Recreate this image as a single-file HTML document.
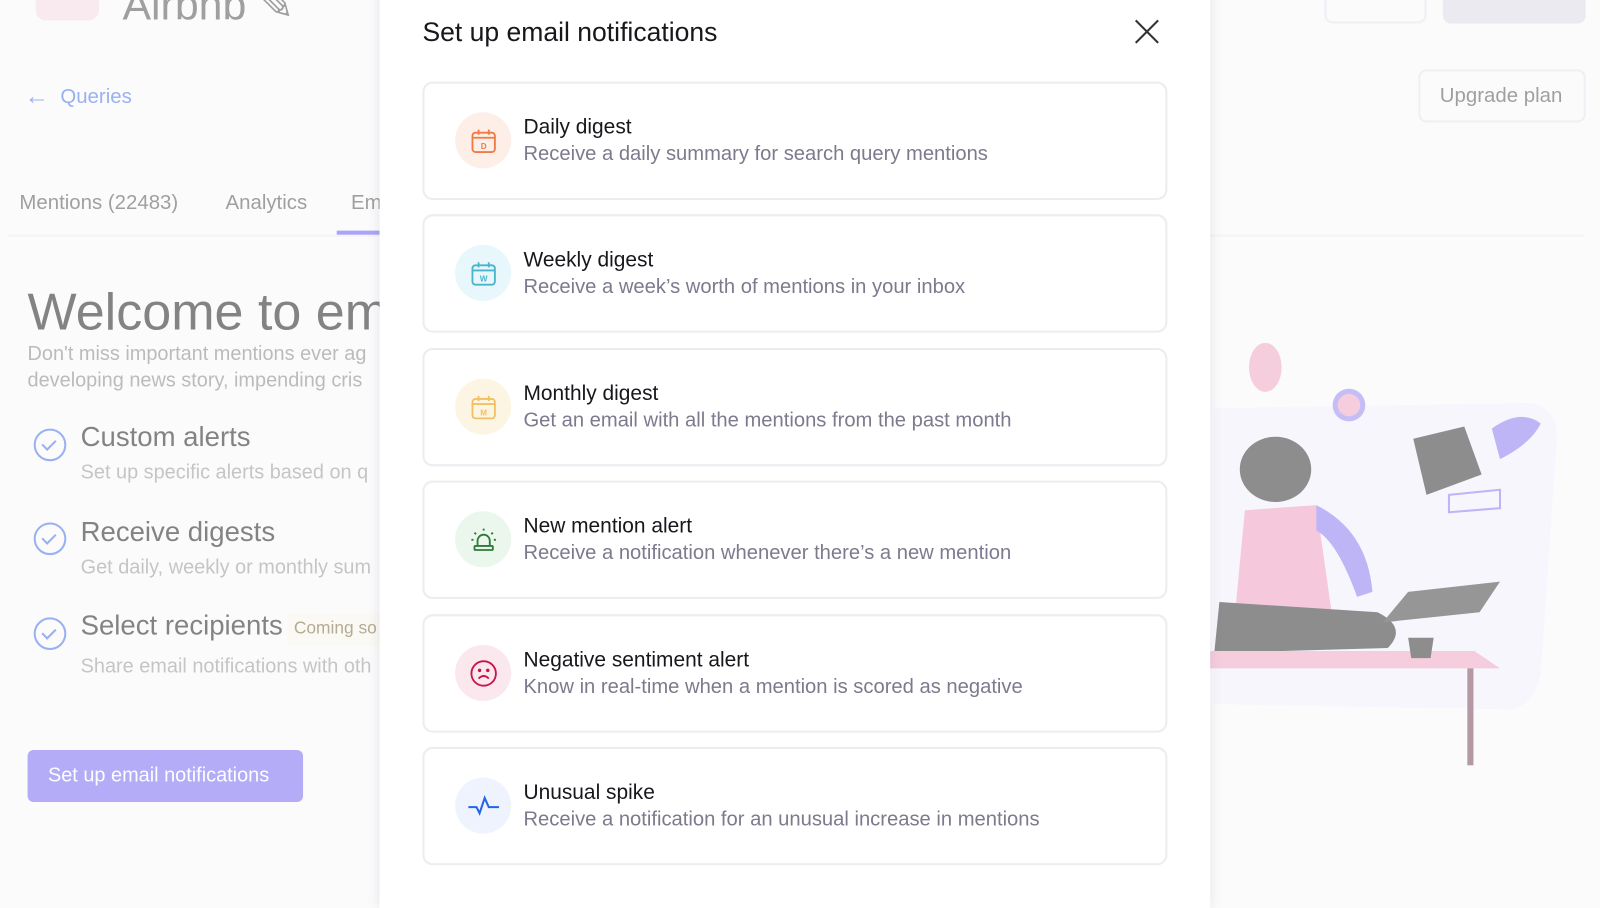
<!DOCTYPE html>
<html><head><meta charset="utf-8"><style>
*{box-sizing:border-box;margin:0;padding:0}
body{width:1600px;height:880px;overflow:hidden;background:#fbfbfc;font-family:"Liberation Sans",sans-serif;position:relative}
#w{position:absolute;left:0;top:0;width:1568px;height:880px;transform:scale(1.0204);transform-origin:0 0}
.bg{position:absolute;inset:0;opacity:.55}
.a{position:absolute;white-space:nowrap}
.modal{position:absolute;left:372px;top:-10px;width:814px;height:900px;background:#fff;box-shadow:0 0 12px rgba(60,60,90,.12)}
.card{position:absolute;left:42px;width:730px;height:116px;border:2px solid #ececf1;border-radius:10px;background:#fff}
.ic{position:absolute;left:30px;top:28px;width:55px;height:55px;border-radius:50%;display:flex;align-items:center;justify-content:center}
.t{position:absolute;left:97px;top:31px;font-size:20.5px;color:#17171c}
.d{position:absolute;left:97px;top:58px;font-size:19.8px;color:#7b7b8d}
.ck{position:absolute;width:32px;height:32px;border:2.5px solid #4a74e8;border-radius:50%}
.ck::after{content:"";position:absolute;left:9px;top:6px;width:6px;height:11px;border:solid #4a74e8;border-width:0 2.5px 2.5px 0;transform:rotate(45deg)}
</style></head><body><div id="w">
<div class="bg">
<div class="a" style="left:35px;top:-40px;width:62px;height:60px;background:#f8dde5;border-radius:10px"></div>
<div class="a" style="left:120px;top:-20px;font-size:42px;color:#555">Airbnb ✎</div>
<div class="a" style="left:24px;top:80px;font-size:20px;color:#4a74e8"><span style="font-size:24px;position:relative;top:1px">←</span>&nbsp; Queries</div>
<div class="a" style="left:19px;top:188px;font-size:20px;color:#555">Mentions (22483)</div>
<div class="a" style="left:221px;top:188px;font-size:20px;color:#555">Analytics</div>
<div class="a" style="left:344px;top:188px;font-size:20px;color:#555">Em</div>
<div class="a" style="left:8px;top:230px;width:1544px;height:2px;background:#eee"></div>
<div class="a" style="left:330px;top:226px;width:42px;height:4px;background:#6b5ff0"></div>
<div class="a" style="left:27px;top:276px;font-size:51px;color:#222">Welcome to em</div>
<div class="a" style="left:27px;top:334px;font-size:19.5px;color:#888;line-height:26px">Don't miss important mentions ever ag<br>developing news story, impending cris</div>
<div class="ck" style="left:33px;top:420px"></div>
<div class="a" style="left:79px;top:413px;font-size:27px;color:#222">Custom alerts</div>
<div class="a" style="left:79px;top:452px;font-size:19.5px;color:#999">Set up specific alerts based on q</div>
<div class="ck" style="left:33px;top:512px"></div>
<div class="a" style="left:79px;top:506px;font-size:27px;color:#222">Receive digests</div>
<div class="a" style="left:79px;top:545px;font-size:19.5px;color:#999">Get daily, weekly or monthly sum</div>
<div class="ck" style="left:33px;top:605px"></div>
<div class="a" style="left:79px;top:598px;font-size:27px;color:#222">Select recipients</div>
<div class="a" style="left:282px;top:601px;width:95px;height:32px;background:#fbf7ec"></div>
<div class="a" style="left:288px;top:606px;font-size:17px;color:#7a6a40">Coming so</div>
<div class="a" style="left:79px;top:642px;font-size:19.5px;color:#999">Share email notifications with oth</div>
<div class="a" style="left:27px;top:735px;width:270px;height:51px;background:#7b6cf0;border-radius:6px;color:#fff;font-size:19.5px;padding:14px 20px">Set up email notifications</div>
<div class="a" style="left:1190px;top:-20px;font-size:19px;color:#555">it Usage</div>
<div class="a" style="left:1298px;top:-30px;width:100px;height:53px;border:2px solid #e6e6ee;border-radius:8px"></div>
<div class="a" style="left:1414px;top:-30px;width:140px;height:53px;background:#dcdce6;border-radius:8px"></div>
<div class="a" style="left:1390px;top:68px;width:164px;height:52px;border:2px solid #e6e6ee;border-radius:8px;font-size:20px;color:#555;padding:13px 19px">Upgrade plan</div>
<svg class="a" style="left:1180px;top:320px" width="380" height="440">
<path d="M10 80 L320 75 Q350 80 345 120 L330 340 Q320 380 290 375 L10 370Z" fill="#f4f2fb"/>
<ellipse cx="60" cy="40" rx="16" ry="24" fill="#f0a8c4"/>
<circle cx="142" cy="77" r="16" fill="#9a8cf0"/><circle cx="142" cy="77" r="11" fill="#f0a8c4"/>
<path d="M205 110 L255 98 L272 145 L218 165Z" fill="#333"/>
<path d="M282 100 Q310 80 330 95 Q320 115 290 130Z" fill="#8c7cf0"/>
<ellipse cx="70" cy="140" rx="35" ry="32" fill="#333"/>
<path d="M40 180 L110 175 L125 280 L30 285Z" fill="#f0a0c0"/>
<path d="M110 175 Q160 200 165 260 L150 265 Q130 210 110 200Z" fill="#8c7cf0"/>
<path d="M15 270 L170 280 Q200 295 180 315 L10 320Z" fill="#333"/>
<path d="M200 260 L290 250 L270 280 L175 290Z" fill="#444"/>
<path d="M0 318 L265 318 L290 335 L0 335Z" fill="#f0a8c4"/>
<rect x="258" y="335" width="6" height="95" fill="#7a4a5a"/>
<path d="M240 165 L290 160 L290 178 L240 182Z" fill="none" stroke="#8c7cf0" stroke-width="2"/>
<path d="M200 305 L225 305 L222 325 L203 325Z" fill="#333"/>
</svg>
</div>
<div class="modal">
<div class="a" style="left:42px;top:26px;font-size:26px;color:#17171c">Set up email notifications</div>
<svg class="a" style="left:739px;top:28px" width="26" height="26"><path d="M2 2L24 24M24 2L2 24" stroke="#333" stroke-width="2"/></svg>
<div class="card" style="top:90px"><div class="ic" style="background:#fdeee7"><svg width="28" height="28" viewBox="0 0 28 28" fill="none" stroke="#f07a45" stroke-width="1.8"><rect x="3" y="6" width="22" height="19" rx="3"/><path d="M3 11H25M9 3V8M19 3V8"/><text x="14" y="22" font-size="8" fill="#f07a45" stroke="none" text-anchor="middle" font-family="Liberation Sans" font-weight="bold">D</text></svg></div><div class="t">Daily digest</div><div class="d">Receive a daily summary for search query mentions</div></div>
<div class="card" style="top:220px"><div class="ic" style="background:#e8f7fb"><svg width="28" height="28" viewBox="0 0 28 28" fill="none" stroke="#4ab4cc" stroke-width="1.8"><rect x="3" y="6" width="22" height="19" rx="3"/><path d="M3 11H25M9 3V8M19 3V8"/><text x="14" y="22" font-size="8" fill="#4ab4cc" stroke="none" text-anchor="middle" font-family="Liberation Sans" font-weight="bold">W</text></svg></div><div class="t">Weekly digest</div><div class="d">Receive a week’s worth of mentions in your inbox</div></div>
<div class="card" style="top:351px"><div class="ic" style="background:#fdf5e3"><svg width="28" height="28" viewBox="0 0 28 28" fill="none" stroke="#f2c060" stroke-width="1.8"><rect x="3" y="6" width="22" height="19" rx="3"/><path d="M3 11H25M9 3V8M19 3V8"/><text x="14" y="22" font-size="8" fill="#f2c060" stroke="none" text-anchor="middle" font-family="Liberation Sans" font-weight="bold">M</text></svg></div><div class="t">Monthly digest</div><div class="d">Get an email with all the mentions from the past month</div></div>
<div class="card" style="top:481px"><div class="ic" style="background:#ebf6ec"><svg width="30" height="30" viewBox="0 0 30 30" fill="none" stroke="#2f7a3a" stroke-width="1.8"><path d="M9 21V16a6 6 0 0 1 12 0V21"/><rect x="6" y="21" width="18" height="4" rx="1"/><path d="M15 4V6M6 8L7.5 9.5M24 8L22.5 9.5M3 15H5M25 15H27"/></svg></div><div class="t">New mention alert</div><div class="d">Receive a notification whenever there’s a new mention</div></div>
<div class="card" style="top:612px"><div class="ic" style="background:#fbe7ee"><svg width="30" height="30" viewBox="0 0 30 30" fill="none" stroke="#c8154a" stroke-width="1.8"><circle cx="15" cy="15" r="12"/><path d="M10 20Q15 15 20 20"/><circle cx="11" cy="12" r=".8" fill="#c8154a"/><circle cx="19" cy="12" r=".8" fill="#c8154a"/></svg></div><div class="t">Negative sentiment alert</div><div class="d">Know in real-time when a mention is scored as negative</div></div>
<div class="card" style="top:742px"><div class="ic" style="background:#eef3fd"><svg width="32" height="30" viewBox="0 0 32 30" fill="none" stroke="#2563eb" stroke-width="2"><path d="M1 16H9L12 22L17 7L21 16H31"/></svg></div><div class="t">Unusual spike</div><div class="d">Receive a notification for an unusual increase in mentions</div></div>
</div>
</div></body></html>
